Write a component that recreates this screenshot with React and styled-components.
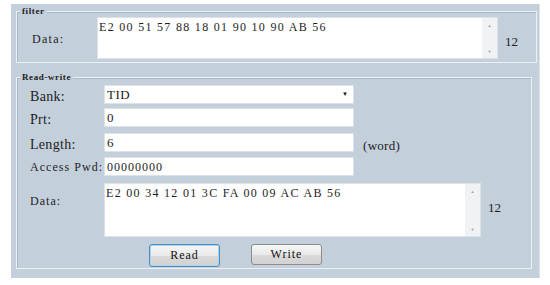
import React from "react";
import styled, { createGlobalStyle } from "styled-components";

const GlobalStyle = createGlobalStyle`
	html, body {
		margin: 0;
		padding: 0;
		background: #ffffff;
	}
	body {
		font-family: "Liberation Serif", serif;
		font-size: 12px;
		color: #1a1a1a;
	}
`;

function ReadWritePage() {
	return (
		<Panel>
			<GlobalStyle />
			<Group width={521} height={52} top={7}>
				<Legend>filter</Legend>
				<FilterRow>
					<Label>Data:</Label>
					<TextBox width={401} height={42}>
						<BoxText>E2 00 51 57 88 18 01 90 10 90 AB 56</BoxText>
						<ScrollBar>
							<Arrow>▲</Arrow>
							<Arrow>▼</Arrow>
						</ScrollBar>
					</TextBox>
					<Count low>12</Count>
				</FilterRow>
			</Group>
			<Group width={516} height={192} top={14}>
				<Legend>Read-write</Legend>
				<Form>
					<Row>
						<Label big>Bank:</Label>
						<Input>
							<Value big>TID</Value>
							<Caret>▼</Caret>
						</Input>
					</Row>
					<Row gap={4}>
						<Label big>Prt:</Label>
						<Input>
							<Value big>0</Value>
						</Input>
					</Row>
					<Row gap={6}>
						<Label big>Length:</Label>
						<Input>
							<Value big>6</Value>
						</Input>
						<Unit>(word)</Unit>
					</Row>
					<Row gap={5}>
						<Label>Access Pwd:</Label>
						<Input>
							<Value>00000000</Value>
						</Input>
					</Row>
					<Row gap={7} top>
						<Label top>Data:</Label>
						<TextBox width={377} height={54}>
							<BoxText>E2 00 34 12 01 3C FA 00 09 AC AB 56</BoxText>
							<ScrollBar>
								<Arrow>▲</Arrow>
								<Arrow>▼</Arrow>
							</ScrollBar>
						</TextBox>
						<Count>12</Count>
					</Row>
					<Buttons>
						<Button focused>Read</Button>
						<Button>Write</Button>
					</Buttons>
				</Form>
			</Group>
		</Panel>
	);
}

const Panel = styled.div`
	box-sizing: border-box;
	margin: 4px 0 0 11px;
	width: 529px;
	height: 274px;
	padding: 0 0 0 5px;
	background: #c3cfdb;
	border-right: 1px solid #dbe3eb;
	overflow: hidden;
	display: flex;
	flex-direction: column;
`;

const Group = styled.div`
	position: relative;
	box-sizing: border-box;
	width: ${(p) => p.width}px;
	height: ${(p) => p.height}px;
	margin-top: ${(p) => p.top}px;
	border: 1px solid #eaf0f5;
	box-shadow: inset 1px 1px 0 #a9b7c6;
`;

const Legend = styled.span`
	position: absolute;
	top: -6px;
	left: 3px;
	padding: 0 2px;
	background: #c3cfdb;
	font-family: "Liberation Serif", serif;
	font-size: 9px;
	line-height: 10px;
	letter-spacing: 0.6px;
	font-weight: bold;
	color: #222;
`;

const FilterRow = styled.div`
	display: flex;
	align-items: center;
	padding: 5px 0 0 15px;
`;

const Form = styled.div`
	display: flex;
	flex-direction: column;
	padding: 7px 0 0 13px;
`;

const Row = styled.div`
	display: flex;
	align-items: ${(p) => (p.top ? "flex-start" : "center")};
	height: ${(p) => (p.top ? "auto" : "19px")};
	margin-top: ${(p) => p.gap || 0}px;
`;

const Label = styled.div`
	width: 74px;
	flex-shrink: 0;
	font-family: "Liberation Serif", serif;
	font-size: ${(p) => (p.big ? "14px" : "12px")};
	letter-spacing: ${(p) => (p.big ? "0.3px" : "1.05px")};
	line-height: 14px;
	padding-top: ${(p) => (p.top ? 11 : p.big ? 4 : 1)}px;
	color: #1e1e1e;
	${FilterRow} & {
		width: 65px;
		padding-top: 2px;
		letter-spacing: 1.3px;
	}
`;

const Input = styled.div`
	position: relative;
	box-sizing: border-box;
	width: 250px;
	height: 19px;
	background: #ffffff;
	border: 1px solid #dce2e8;
	display: flex;
	align-items: center;
	padding-left: 2px;
`;

const Value = styled.span`
	font-family: "Liberation Serif", serif;
	font-size: ${(p) => (p.big ? "13px" : "12px")};
	letter-spacing: ${(p) => (p.big ? "0.5px" : "1px")};
	line-height: 14px;
	color: #1e1e1e;
`;

const Caret = styled.span`
	position: absolute;
	right: 5px;
	top: 5px;
	font-size: 6px;
	line-height: 6px;
	color: #111;
`;

const Unit = styled.span`
	margin-left: 9px;
	padding-top: 6px;
	font-family: "Liberation Serif", serif;
	font-size: 13px;
	line-height: 13px;
	letter-spacing: 0.3px;
	color: #222;
`;

const TextBox = styled.div`
	box-sizing: border-box;
	width: ${(p) => p.width}px;
	height: ${(p) => p.height}px;
	background: #ffffff;
	border: 1px solid #dce2e8;
	display: flex;
`;

const BoxText = styled.div`
	flex: 1;
	padding: 2px 0 0 1px;
	font-family: "Liberation Serif", serif;
	font-size: 12px;
	letter-spacing: 1.3px;
	line-height: 14px;
	color: #1e1e1e;
`;

const ScrollBar = styled.div`
	width: 15px;
	background: #f1f2f3;
	display: flex;
	flex-direction: column;
	justify-content: space-between;
	align-items: center;
	padding: 5px 0 4px;
`;

const Arrow = styled.span`
	font-size: 4px;
	line-height: 5px;
	color: #9a9a9a;
`;

const Count = styled.span`
	margin-left: 7px;
	padding-top: ${(p) => (p.low ? 8 : 18)}px;
	font-family: "Liberation Serif", serif;
	font-size: 13px;
	line-height: 14px;
	color: #222;
`;

const Buttons = styled.div`
	display: flex;
	align-items: flex-start;
	gap: 31px;
	margin: 7px 0 0 119px;
`;

const Button = styled.button`
	box-sizing: border-box;
	width: 71px;
	height: ${(p) => (p.focused ? 23 : 21)}px;
	padding: 0;
	border-radius: 3px;
	border: 1px solid ${(p) => (p.focused ? "#4f8cc0" : "#8c8c8c")};
	box-shadow: ${(p) => (p.focused ? "inset 0 0 0 1px #a9d2ef" : "none")};
	background: linear-gradient(#f7f7f7, #e9e9e9 50%, #dadada 51%, #d2d2d2);
	font-family: "Liberation Serif", serif;
	font-size: 12px;
	letter-spacing: 1px;
	color: #111;
`;

export default ReadWritePage;
